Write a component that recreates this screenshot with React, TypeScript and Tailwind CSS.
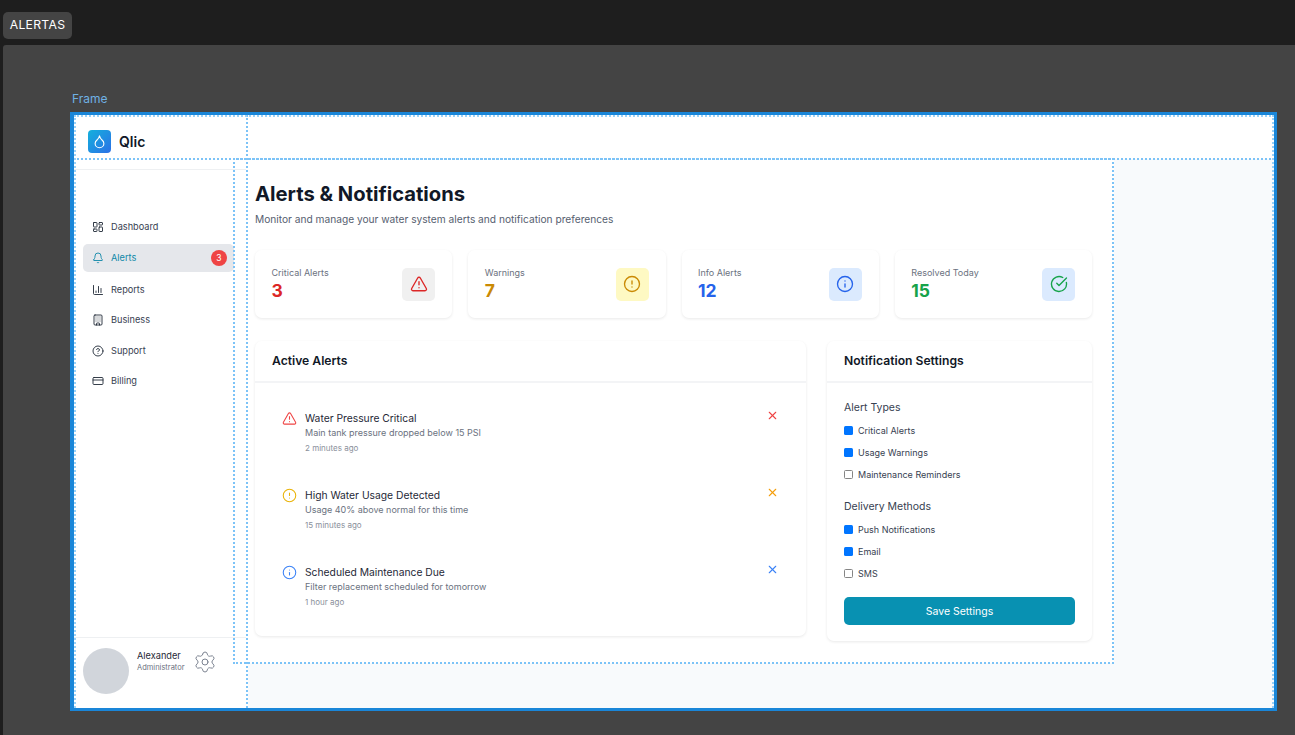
import React from "react";
import {
  AlertCircle,
  AlertTriangle,
  BarChart3,
  Bell,
  CheckCircle,
  CircleHelp,
  CreditCard,
  Droplet,
  Info,
  LayoutDashboard,
  Settings,
  X,
  Building,
} from "lucide-react";

const navItems = [
  { label: "Dashboard", icon: LayoutDashboard, rowClass: "h-[30px] mb-[2px]" },
  { label: "Alerts", icon: Bell, rowClass: "h-[28px] mb-[4px]", active: true },
  { label: "Reports", icon: BarChart3, rowClass: "h-[28px] mb-[2px]" },
  { label: "Business", icon: Building, rowClass: "h-[28px] mb-[2.5px]" },
  { label: "Support", icon: CircleHelp, rowClass: "h-[28px] mb-[2px]" },
  { label: "Billing", icon: CreditCard, rowClass: "h-[28px]" },
];

const stats = [
  { label: "Critical Alerts", value: "3", icon: AlertTriangle, valueClass: "text-[#dc2626]", boxClass: "bg-[#f0f0f0] text-[#dc2626]" },
  { label: "Warnings", value: "7", icon: AlertCircle, valueClass: "text-[#ca8a04]", boxClass: "bg-[#fef9c3] text-[#ca8a04]" },
  { label: "Info Alerts", value: "12", icon: Info, valueClass: "text-[#2563eb]", boxClass: "bg-[#dbeafe] text-[#2563eb]" },
  { label: "Resolved Today", value: "15", icon: CheckCircle, valueClass: "text-[#16a34a]", boxClass: "bg-[#dbeafe] text-[#16a34a]" },
];

const alerts = [
  { title: "Water Pressure Critical", text: "Main tank pressure dropped below 15 PSI", time: "2 minutes ago", icon: AlertTriangle, iconClass: "text-[#ef4444]", closeClass: "text-[#ef4444]" },
  { title: "High Water Usage Detected", text: "Usage 40% above normal for this time", time: "15 minutes ago", icon: AlertCircle, iconClass: "text-[#eab308]", closeClass: "text-[#f59e0b]" },
  { title: "Scheduled Maintenance Due", text: "Filter replacement scheduled for tomorrow", time: "1 hour ago", icon: Info, iconClass: "text-[#3b82f6]", closeClass: "text-[#3b82f6]" },
];

const alertTypes = [
  { label: "Critical Alerts", checked: true },
  { label: "Usage Warnings", checked: true },
  { label: "Maintenance Reminders", checked: false },
];

const deliveryMethods = [
  { label: "Push Notifications", checked: true },
  { label: "Email", checked: true },
  { label: "SMS", checked: false },
];

function Sidebar() {
  return (
    <aside className="flex w-[174px] shrink-0 flex-col border-r-2 border-dotted border-[#7cc3f7] bg-white">
      <div className="flex h-[55px] items-center gap-[8px] border-b border-[#eef0f2] pb-[2px] pl-[14px]">
        <div className="flex size-[23px] items-center justify-center rounded-[4px] bg-gradient-to-br from-[#14b0dc] to-[#2b6fe6]">
          <Droplet className="size-[15px] text-white" strokeWidth={1.8} />
        </div>
        <span className="text-[14px] font-semibold text-[#111827]">Qlic</span>
      </div>
      <nav className="flex flex-col pt-[42px] pl-[9px]">
        {navItems.map((item) => (
          <div
            key={item.label}
            className={`flex w-[151px] items-center gap-[7px] rounded-[5px] pl-[9px] ${item.rowClass} ${
              item.active ? "bg-[#e5e7eb] text-[#0e87a8]" : "text-[#374151]"
            }`}
          >
            <item.icon className={`size-[12px] ${item.active ? "text-[#0e87a8]" : "text-[#1f2937]"}`} strokeWidth={1.8} />
            <span className="flex-1 text-[9.2px]">{item.label}</span>
            {item.active && (
              <span className="mr-[7px] flex size-[16px] items-center justify-center rounded-full bg-[#ef4444] text-[8.5px] text-white">
                3
              </span>
            )}
          </div>
        ))}
      </nav>
      <div className="mt-auto flex h-[71px] items-start gap-[8px] border-t border-[#eef0f2] pt-[10px] pl-[9px]">
        <div className="size-[46px] shrink-0 rounded-full bg-[#d1d5db]" />
        <div className="pt-[1px]">
          <p className="text-[9.2px] leading-[13px] text-[#1f2937]">Alexander</p>
          <p className="text-[7.5px] leading-[12px] text-[#6b7280]">Administrator</p>
        </div>
        <Settings className="mt-[2px] size-[24px] text-[#7b8290]" strokeWidth={1} />
      </div>
    </aside>
  );
}

function StatCard({ stat }: { stat: (typeof stats)[number] }) {
  return (
    <div className="flex h-[68px] items-center justify-between rounded-[7px] bg-white pr-[17px] pl-[16.5px] shadow-[0_1px_3px_rgba(0,0,0,0.09)]">
      <div className="pt-[2px]">
        <p className="text-[9px] leading-[12px] text-[#6b7280]">{stat.label}</p>
        <p className={`text-[17.5px] leading-[24px] font-bold ${stat.valueClass}`}>{stat.value}</p>
      </div>
      <div className={`flex size-[33px] items-center justify-center rounded-[5px] ${stat.boxClass}`}>
        <stat.icon className="size-[18px]" strokeWidth={1.8} />
      </div>
    </div>
  );
}

function PanelHeader({ title }: { title: string }) {
  return (
    <div className="flex h-[42px] items-center border-b-2 border-[#f3f4f6] pl-[17px]">
      <h2 className="text-[12.15px] font-semibold text-[#111827]">{title}</h2>
    </div>
  );
}

function CheckRow({ label, checked }: { label: string; checked: boolean }) {
  return (
    <div className="flex h-[22px] items-center gap-[5px]">
      <span
        className={`size-[9px] rounded-[1.5px] ${
          checked ? "bg-[#0075ff]" : "border border-[#858585] bg-white"
        }`}
      />
      <span className="text-[9px] text-[#374151]">{label}</span>
    </div>
  );
}

function AlertRow({ alert }: { alert: (typeof alerts)[number] }) {
  return (
    <div className="flex h-[77px] pr-[27px] pl-[27px]">
      <alert.icon className={`-mt-[1px] size-[15px] shrink-0 ${alert.iconClass}`} strokeWidth={1.7} />
      <div className="-mt-[1px] flex-1 pl-[8px]">
        <p className="text-[10.3px] leading-[15px] text-[#1f2937]">{alert.title}</p>
        <p className="text-[9px] leading-[14px] text-[#6b7280]">{alert.text}</p>
        <p className="mt-[1px] text-[8px] leading-[14px] text-[#8a909b]">{alert.time}</p>
      </div>
      <X className={`-mt-[3px] size-[13px] ${alert.closeClass}`} strokeWidth={2} />
    </div>
  );
}

function Content() {
  return (
    <main className="relative flex min-w-0 flex-1 flex-col bg-[#f8fafc]">
      <div className="h-[44px] shrink-0 bg-white" />
      <div className="h-[504px] w-[866px] bg-white pt-[21px] pl-[7px]">
        <h1 className="text-[20.2px] leading-[28px] font-bold text-[#111827]">Alerts &amp; Notifications</h1>
        <p className="mt-[4px] text-[10.18px] leading-[14px] text-[#566070]">
          Monitor and manage your water system alerts and notification preferences
        </p>
        <div className="mt-[24px] grid w-[837px] grid-cols-4 gap-x-[16px]">
          {stats.map((stat) => (
            <StatCard key={stat.label} stat={stat} />
          ))}
        </div>
        <div className="mt-[23px] flex w-[837px] items-start gap-[21px]">
          <section className="h-[295px] w-[551px] rounded-[7px] bg-white shadow-[0_1px_3px_rgba(0,0,0,0.09)]">
            <PanelHeader title="Active Alerts" />
            <div className="pt-[29px]">
              {alerts.map((alert) => (
                <AlertRow key={alert.title} alert={alert} />
              ))}
            </div>
          </section>
          <section className="h-[300px] w-[265px] rounded-[7px] bg-white shadow-[0_1px_3px_rgba(0,0,0,0.09)]">
            <PanelHeader title="Notification Settings" />
            <div className="px-[17px] pt-[17px]">
              <h3 className="mb-[3.5px] text-[10.5px] leading-[16px] text-[#374151]">Alert Types</h3>
              {alertTypes.map((row) => (
                <CheckRow key={row.label} {...row} />
              ))}
              <h3 className="mt-[13.5px] mb-[3.5px] text-[10.5px] leading-[16px] text-[#374151]">Delivery Methods</h3>
              {deliveryMethods.map((row) => (
                <CheckRow key={row.label} {...row} />
              ))}
              <button className="mt-[12.5px] h-[28px] w-full rounded-[5px] bg-[#0891b2] pt-[1px] text-[10.5px] text-white">
                Save Settings
              </button>
            </div>
          </section>
        </div>
      </div>
    </main>
  );
}

export default function App() {
  return (
    <div className="flex h-[735px] w-[1295px] flex-col overflow-hidden bg-[#1e1e1e] font-['Inter',sans-serif]">
      <div className="h-[45px] shrink-0 pt-[12px] pl-[3px]">
        <div className="flex h-[27px] w-[69px] items-center justify-center rounded-[5px] bg-[#444444] text-[12.2px] tracking-[0.3px] text-white">
          ALERTAS
        </div>
      </div>
      <div className="relative ml-[3px] flex-1 rounded-tl-[3px] bg-[#444444]">
        <span className="absolute top-[46px] left-[69px] text-[12px] leading-[15px] text-[#6fb1e4]">Frame</span>
        <div className="absolute top-[67px] left-[67px] flex h-[599px] w-[1207px] border-[3px] border-l-4 border-[#1a86d8]">
          <Sidebar />
          <Content />
          <div className="pointer-events-none absolute inset-x-0 top-[43px] border-t-2 border-dotted border-[#7cc3f7]" />
          <div className="pointer-events-none absolute top-[43px] left-[159px] h-[506px] w-[881px] border-2 border-dotted border-[#7cc3f7]" />
          <div className="pointer-events-none absolute inset-0 border-2 border-b-0 border-dotted border-[#9ad2f8]" />
        </div>
      </div>
    </div>
  );
}
